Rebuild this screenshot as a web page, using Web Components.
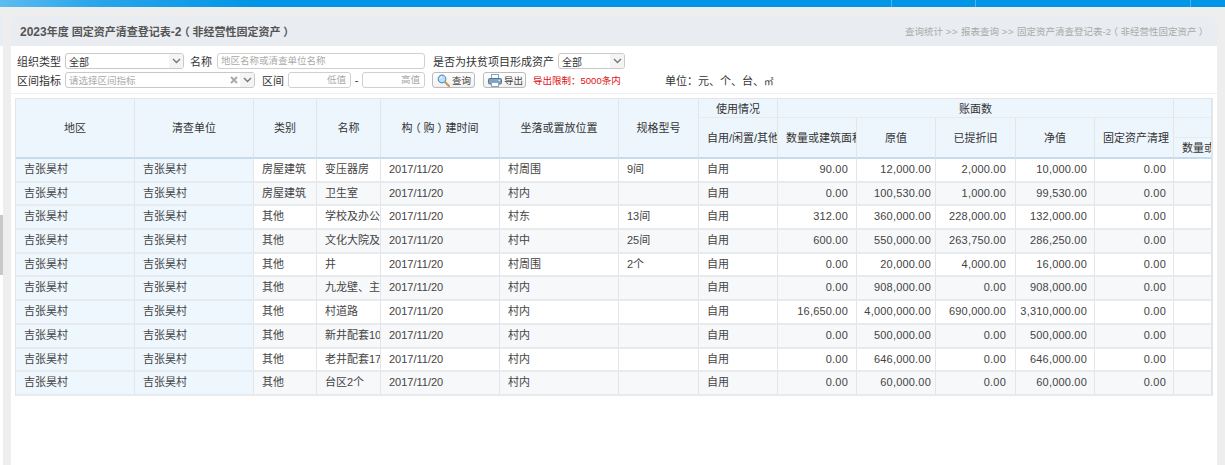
<!DOCTYPE html>
<html lang="zh">
<head>
<meta charset="utf-8">
<title>固定资产清查登记表</title>
<style>
html, body { margin: 0; height: 100%; overflow: hidden; background: #eeeeee; }
body { font: 11px "Liberation Sans", "Noto Sans CJK SC", sans-serif; color: #333; }
</style>
</head>
<body>
<app-shell>
  <panel-head
    title-text="2023年度 固定资产清查登记表-2（非经营性固定资产）"
    crumbs="查询统计 >> 报表查询 >> 固定资产清查登记表-2（非经营性固定资产）"></panel-head>
  <filter-bar></filter-bar>
  <asset-table></asset-table>
</app-shell>

<script>
// the reference sets these marks in the middle of their em box: half-width glyph plus even margins
const PUNCT = `
  i.c { font-style:normal; font-family:"Noto Sans CJK TC", sans-serif; }
  i.b { font-style:normal; font-feature-settings:"halt"; margin:0 .25em; }`;
const punct = s => s.replace(/[（）：]/g, m => `<i class="${m === '：' ? 'c' : 'b'}">${m}</i>`);

class AppShell extends HTMLElement {
    constructor() {
        super();
        let shadowRoot = this.attachShadow({ mode: 'open' });
        shadowRoot.innerHTML = `
        <style>
        :host { display:block; width:1225px; height:465px; overflow:hidden; }
        .top { height:7px; display:flex; background:linear-gradient(90deg,#5dbcef 0,#2ba6ea 90px,#0095e6 260px,#0095e6 100%); }
        .sep { width:1px; margin-left:var(--x); background:#49b4ee; }
        .body { display:flex; gap:8px; padding-top:9px; height:449px; }
        .side { width:3px; flex:none; position:relative; background:#fff; }
        .side .cap { height:30px; background:#e9ecf0; }
        .side .grip { position:absolute; left:0; top:199px; width:3px; height:60px; background:#c8c8c8; }
        .main { width:1206px; flex:none; background:#fff; border-radius:3px 3px 0 0; display:flex; flex-direction:column; }
        </style>
        <div class="top">
          <i class="sep" style="--x:891px"></i><i class="sep" style="--x:83px"></i><i class="sep" style="--x:214px"></i>
        </div>
        <div class="body">
          <div class="side"><div class="cap"></div><div class="grip"></div></div>
          <div class="main"><slot></slot></div>
        </div>`;
    }
}

class PanelHead extends HTMLElement {
    constructor() {
        super();
        this.attachShadow({ mode: 'open' });
    }
    connectedCallback() {
        const crumbs = punct(this.getAttribute('crumbs')).replace(/>>/g, '<b>&gt;&gt;</b>');
        // latin digits in the title run a little larger than the hanzi
        const title = punct(this.getAttribute('title-text')).replace(/[-\d]+/g, m => `<u>${m}</u>`);
        this.shadowRoot.innerHTML = `
        <style>
        ${PUNCT}
        :host { display:flex; align-items:center; justify-content:space-between; height:30px; padding:0 11px 0 9px;
                background:#e9ecf0; border-radius:3px 3px 0 0; }
        h1 { margin:0; font-size:11px; font-weight:bold; color:#555; white-space:nowrap; }
        u { text-decoration:none; font-size:12px; }
        span { font-size:9.5px; color:#aaa; white-space:nowrap; }
        b { font-weight:normal; letter-spacing:.8px; }
        </style>
        <h1>${title}</h1>
        <span>${crumbs}</span>`;
    }
}

class DropBox extends HTMLElement {
    constructor() {
        super();
        this.attachShadow({ mode: 'open' });
    }
    connectedCallback() {
        const placeholder = this.hasAttribute('placeholder');
        this.shadowRoot.innerHTML = `
        <style>
        :host { display:flex; align-items:center; box-sizing:border-box; height:16px; border:1px solid #c9c9c9; border-radius:3px;
                background:#fff; overflow:hidden; flex:none; }
        .t { flex:1; padding-left:3px; font-size:10px; white-space:nowrap; color:#333; }
        .t.ph { font-size:9.5px; color:#aaa; }
        .x { width:12px; height:14px; display:flex; align-items:center; justify-content:center; }
        .a { width:14px; height:14px; display:flex; align-items:center; justify-content:center; background:#f4f4f4; }
        svg { display:block; }
        </style>
        <span class="t ${placeholder ? 'ph' : ''}">${this.getAttribute('placeholder') || this.getAttribute('value') || ''}</span>
        ${this.hasAttribute('clear') ? `<span class="x"><svg width="8" height="8" viewBox="0 0 8 8"><path d="M1 1l6 6M7 1L1 7" stroke="#aaa" stroke-width="2"/></svg></span>` : ''}
        <span class="a"><svg width="9" height="6" viewBox="0 0 9 6"><path d="M1 1l3.5 3.5L8 1" fill="none" stroke="#777" stroke-width="1.4"/></svg></span>`;
    }
}

class TextBox extends HTMLElement {
    constructor() {
        super();
        this.attachShadow({ mode: 'open' });
    }
    connectedCallback() {
        const right = this.hasAttribute('right');
        this.shadowRoot.innerHTML = `
        <style>
        :host { display:block; box-sizing:border-box; height:16px; line-height:14px; border:1px solid #d0d0d0; border-radius:3px; background:#fff;
                padding:0 4px 0 3px; font-size:9.5px; color:#aaa; white-space:nowrap; flex:none; text-align:${right ? 'right' : 'left'}; }
        </style>${this.getAttribute('placeholder')}`;
    }
}

const ICONS = {
    search: `<svg width="13" height="13" viewBox="0 0 13 13"><path d="M8 8l4 4" stroke="#c49a55" stroke-width="2.2" stroke-linecap="round"/><circle cx="5" cy="5" r="3.8" fill="#bfe0f7" stroke="#5a96c8" stroke-width="1.2"/><path d="M3 4.2a2.3 2.3 0 0 1 2-1.4" fill="none" stroke="#fff"/></svg>`,
    print: `<svg width="14" height="13" viewBox="0 0 14 13"><rect x="3.5" y="0.5" width="7" height="5" fill="#fff" stroke="#8aa4bd"/><rect x="0.5" y="4.5" width="13" height="5.5" rx="1.2" fill="#7fa5c6" stroke="#4f7698"/><rect x="3.5" y="8.5" width="7" height="4" fill="#fff" stroke="#8aa4bd"/><rect x="10.5" y="5.8" width="1.6" height="1.2" fill="#dff0ff"/></svg>`
};

class ToolButton extends HTMLElement {
    constructor() {
        super();
        this.attachShadow({ mode: 'open' });
    }
    connectedCallback() {
        this.shadowRoot.innerHTML = `
        <style>
        :host { display:flex; align-items:center; gap:2px; box-sizing:border-box; width:43px; height:16px; padding-left:4px; flex:none;
                border:1px solid #bbb; border-radius:3px; background:linear-gradient(#fff,#f1f1f1); font-size:9.5px; color:#444; white-space:nowrap; }
        svg { display:block; flex:none; }
        </style>${ICONS[this.getAttribute('icon')]}<slot></slot>`;
    }
}

class FilterBar extends HTMLElement {
    constructor() {
        super();
        let shadowRoot = this.attachShadow({ mode: 'open' });
        shadowRoot.innerHTML = `
        <style>
        ${PUNCT}
        :host { display:flex; flex-direction:column; gap:3px; box-sizing:border-box; height:48px; padding:7px 0 0 6px; border-bottom:1px solid #f0f0f0; flex:none; }
        .row { display:flex; align-items:center; height:16px; white-space:nowrap; }
        .red { font-size:9.5px; color:#e01010; margin-left:7px; width:132px; flex:none; }
        </style>
        <div class="row">
          <span style="width:48px">组织类型</span>
          <drop-box value="全部" style="width:119px"></drop-box>
          <span style="width:27px;margin-left:6px">名称</span>
          <text-box placeholder="地区名称或清查单位名称" style="width:208px"></text-box>
          <span style="margin-left:8px;width:125px">是否为扶贫项目形成资产</span>
          <drop-box value="全部" style="width:67px"></drop-box>
        </div>
        <div class="row">
          <span style="width:48px">区间指标</span>
          <drop-box placeholder="请选择区间指标" clear style="width:190px"></drop-box>
          <span style="width:26px;margin-left:7px">区间</span>
          <text-box right placeholder="低值" style="width:63px"></text-box>
          <span style="width:11px;text-align:center">-</span>
          <text-box right placeholder="高值" style="width:63px"></text-box>
          <tool-button icon="search" style="margin-left:7px">查询</tool-button>
          <tool-button icon="print" style="margin-left:8px">导出</tool-button>
          <span class="red">${punct('导出限制：5000条内')}</span>
          <span>${punct('单位：元、个、台、')}<span style="font-size:9.5px">㎡</span></span>
        </div>`;
    }
}

const ROWS = [
    ['房屋建筑','变压器房','村周围','9间','90.00','12,000.00','2,000.00','10,000.00'],
    ['房屋建筑','卫生室','村内','','0.00','100,530.00','1,000.00','99,530.00'],
    ['其他','学校及办公','村东','13间','312.00','360,000.00','228,000.00','132,000.00'],
    ['其他','文化大院及','村中','25间','600.00','550,000.00','263,750.00','286,250.00'],
    ['其他','井','村周围','2个','0.00','20,000.00','4,000.00','16,000.00'],
    ['其他','九龙壁、主','村内','','0.00','908,000.00','0.00','908,000.00'],
    ['其他','村道路','村内','','16,650.00','4,000,000.00','690,000.00','3,310,000.00'],
    ['其他','新井配套10','村内','','0.00','500,000.00','0.00','500,000.00'],
    ['其他','老井配套17','村内','','0.00','646,000.00','0.00','646,000.00'],
    ['其他','台区2个','村内','','0.00','60,000.00','0.00','60,000.00']
];

// right padding of the five number columns
const NUM_PAD = [8, 4, 9, 7, 7];

class AssetTable extends HTMLElement {
    constructor() {
        super();
        this.attachShadow({ mode: 'open' });
    }
    connectedCallback() {
        // rows: two header rows plus the small split under the last column, then data
        const head = [
            ['地区',1,1,3],['清查单位',2,1,3],['类别',3,1,3],['名称',4,1,3],['构（购）建时间',5,1,3],
            ['坐落或置放位置',6,1,3],['规格型号',7,1,3],['使用情况',8,1,1],['账面数',9,1,1,5],['',14,1,1],
            ['自用/闲置/其他',8,2,2],['数量或建筑面积',9,2,2],['原值',10,2,2],['已提折旧',11,2,2],
            ['净值',12,2,2],['固定资产清理',13,2,2],['',14,2,1],['数量或建筑面积',14,3,1]
        ];
        let html = head.map(([t,c,r,rs,cs]) =>
            `<div class="th ${r+rs===4 ? 'last' : ''} ${rs===3 ? 'tall' : ''}" style="grid-column:${c} / span ${cs||1};grid-row:${r} / span ${rs}"><span>${punct(t)}</span></div>`).join('');
        ROWS.forEach((d,i) => {
            const alt = i % 2 ? 'alt' : '';
            const cells = [
                ['吉张昊村','fix'],['吉张昊村','fix'],[d[0],alt],[d[1],alt],['2017/11/20',alt],[d[2],alt],[d[3],alt],['自用',alt]
            ];
            html += cells.map(([t,k]) => `<div class="td ${k}">${t}</div>`).join('');
            [d[4],d[5],d[6],d[7],'0.00'].forEach((t,n) => {
                html += `<div class="td ${alt} num" style="padding-right:${NUM_PAD[n]}px">${t}</div>`;
            });
            html += `<div class="td ${alt}"></div>`;
        });
        this.shadowRoot.innerHTML = `
        <style>
        ${PUNCT}
        :host { display:block; margin:4px 4px 0; flex:none; }
        .grid { display:grid; box-sizing:border-box; width:1198px; border-top:1px solid #e2e6ea; border-left:1px solid #e2e6ea; border-right:1px solid #e2e6ea;
                grid-template-columns:119px 119px 63px 64px 119px 119px 80px 79px 79px 79px 80px 79px 79px 38px;
                grid-template-rows:19px 20px 21px repeat(10,23.7px); }
        .th, .td { box-sizing:border-box; overflow:hidden; white-space:nowrap; border-right:1px solid #e2e6ea; border-bottom:2px solid #e8ebee; }
        .th { display:flex; align-items:center; justify-content:center; padding-bottom:1px; background:#eef6fd; color:#333; border-bottom-width:1px; }
        .th span { flex:none; }
        .th.tall { padding-bottom:3px; }
        .th.last { border-bottom:2px solid #c6dbee; }
        .td { line-height:21px; padding:0 8px; font-size:11px; background:#fff; color:#444; }
        .td.fix { background:#eff7fe; }
        .td.alt { background:#f7f8fa; }
        .td.num { text-align:right; padding-left:0; letter-spacing:.2px; }
        </style>
        <div class="grid">${html}</div>`;
        // a centred label that does not fit keeps its start and loses its end
        this.shadowRoot.querySelectorAll('.th').forEach(th => {
            if (th.firstChild.scrollWidth > th.clientWidth - 16) {
                th.style.justifyContent = 'flex-start';
                th.style.paddingLeft = '8px';
            }
        });
    }
}

customElements.define('app-shell', AppShell);
customElements.define('panel-head', PanelHead);
customElements.define('drop-box', DropBox);
customElements.define('text-box', TextBox);
customElements.define('tool-button', ToolButton);
customElements.define('filter-bar', FilterBar);
customElements.define('asset-table', AssetTable);
</script>
</body>
</html>
